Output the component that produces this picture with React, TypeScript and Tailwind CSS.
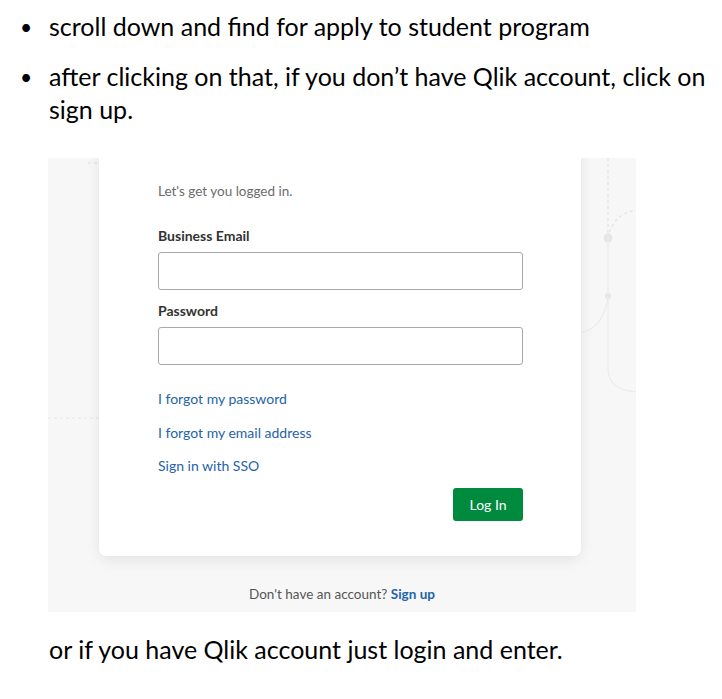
export default function App() {
  return (
    <div className="w-[722px] h-[699px] bg-white overflow-hidden font-['Lato',sans-serif] text-black">
      {/* Bullets */}
      <ul className="pt-[10px] pl-[20px] pr-2 text-[25px] leading-[33px]">
        <li className="flex">
          <span className="w-[29px] shrink-0 text-[21px]">•</span>
          <span>scroll down and find for apply to student program</span>
        </li>
        <li className="flex mt-[17px]">
          <span className="w-[29px] shrink-0 text-[21px]">•</span>
          <span>after clicking on that, if you don’t have Qlik account, click on sign up.</span>
        </li>
      </ul>

      {/* Screenshot of login page */}
      <div className="relative ml-[48px] mt-[32px] w-[588px] h-[454px] bg-[#f7f7f7] overflow-hidden font-['Lato',sans-serif]">
        <svg className="absolute inset-0" width="588" height="454" fill="none">
          <path d="M560 0 V80" stroke="#e6e6e6" strokeWidth="1.5" strokeDasharray="3 3" />
          <path d="M560 80 Q565 56 588 52" stroke="#e6e6e6" strokeWidth="1.5" strokeDasharray="3 3" />
          <circle cx="560" cy="80" r="4.5" fill="#e6e6e6" />
          <path d="M560 80 V210 Q560 232 588 234" stroke="#ebebeb" strokeWidth="1.2" />
          <circle cx="560" cy="138" r="3" fill="#e6e6e6" />
          <path d="M560 138 Q556 170 532 175" stroke="#ebebeb" strokeWidth="1.2" />
          <path d="M0 260 H51" stroke="#e6e6e6" strokeWidth="1" strokeDasharray="3 3" />
          <path d="M40 5 H51" stroke="#e6e6e6" strokeWidth="1.5" strokeDasharray="3 3" />
        </svg>

        <div className="absolute left-[51px] top-[-40px] w-[482px] h-[438px] bg-white rounded-[7px] shadow-[0_4px_14px_rgba(0,0,0,0.08)] px-[59px] pt-[40px]">
          <div className="h-[1px] w-[6px] bg-[#888] ml-[142px] -mt-[1px]" />
          <p className="mt-[23px] text-[13.5px] leading-[20px] text-[#6b6b6b]">Let's get you logged in.</p>
          <p className="mt-[25px] text-[14px] leading-[20px] font-bold text-[#333]">Business Email</p>
          <div className="mt-[6px] h-[38px] w-[365px] rounded-[3px] border border-[#a9a9a9]" />
          <p className="mt-[11px] text-[14px] leading-[20px] font-bold text-[#333]">Password</p>
          <div className="mt-[6px] h-[38px] w-[365px] rounded-[3px] border border-[#a9a9a9]" />
          <div className="mt-[24px] flex flex-col gap-[13.5px] text-[14px] leading-[20px] text-[#2563a8]">
            <span>I forgot my password</span>
            <span>I forgot my email address</span>
            <span>Sign in with SSO</span>
          </div>
          <div className="mt-[12px] flex justify-end w-[365px]">
            <button className="h-[33px] w-[70px] rounded-[3px] bg-[#008a3e] text-white text-[14px]">Log In</button>
          </div>
        </div>

        <p className="absolute left-0 right-0 top-[426px] text-center text-[13.5px] leading-[20px] text-[#555]">
          Don't have an account? <span className="font-bold text-[#1d63ad]">Sign up</span>
        </p>
      </div>

      <p className="mt-[21px] ml-[49px] text-[25px] leading-[33px]">or if you have Qlik account just login and enter.</p>
    </div>
  );
}
